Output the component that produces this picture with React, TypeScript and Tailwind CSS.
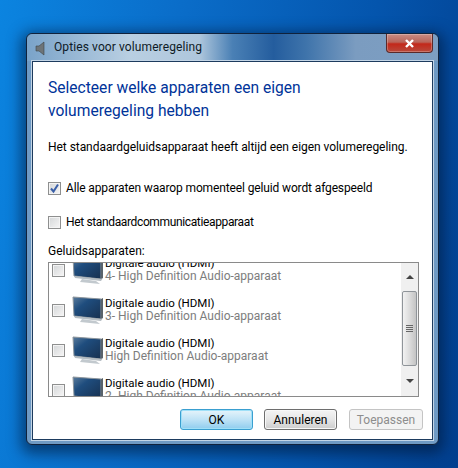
import React from 'react';

const font = { fontFamily: 'Roboto, "Noto Sans", sans-serif' };

const Monitor: React.FC = () => (
  <svg width="34" height="31" viewBox="0 0 34 31" className="shrink-0">
    <defs>
      <linearGradient id="scr" x1="0" y1="0" x2="1" y2="1">
        <stop offset="0" stopColor="#5b7c9c" />
        <stop offset="0.35" stopColor="#1f4d7e" />
        <stop offset="1" stopColor="#17304f" />
      </linearGradient>
    </defs>
    <path d="M1 2 L29 4 L29 24 L2 21 Z" fill="url(#scr)" stroke="#8c959c" strokeWidth="1" />
    <path d="M29 4 L31 3 L31 23 L29 24 Z" fill="#59636b" />
    <path d="M2 21 L29 24 L31 23 L29 26 L3 23 Z" fill="#b4bcc2" />
    <path d="M10 24 L24 26 L28 29 L8 27 Z" fill="#c2c9ce" />
  </svg>
);

const Check: React.FC<{ checked?: boolean }> = ({ checked }) => (
  <span className="flex h-[13px] w-[13px] shrink-0 items-center justify-center border border-[#8e8f8f] bg-gradient-to-br from-[#d4d6d8] to-[#f6f6f6] shadow-[inset_0_0_0_1px_#f4f4f4]">
    {checked && (
      <svg width="11" height="11" viewBox="0 0 11 11">
        <path d="M2 5.5 L4.5 8.5 L9 1.5" fill="none" stroke="#3a5fa8" strokeWidth="2" />
      </svg>
    )}
  </span>
);

const Row: React.FC<{ sub: string; first?: boolean }> = ({ sub, first }) => (
  <div className={`flex h-[40px] shrink-0 items-center pl-[3px] ${first ? 'mt-[-14px]' : ''}`}>
    <Check />
    <span className="ml-[7px]">
      <Monitor />
    </span>
    <div className="ml-[-1px] flex flex-col leading-[13px]">
      <span className="text-[11.5px] text-black">Digitale audio (HDMI)</span>
      <span className="text-[12px] text-[#7d7d7d]">{sub}</span>
    </div>
  </div>
);

const Btn: React.FC<{ label: string; kind: 'ok' | 'normal' | 'off' }> = ({ label, kind }) => {
  const cls =
    kind === 'ok'
      ? 'w-[73px] border-[#3a9fd0] bg-gradient-to-b from-[#e6f4fb] via-[#bfe3f6] to-[#8fcdee] text-black shadow-[inset_0_0_0_1px_#9fe0f8]'
      : kind === 'normal'
        ? 'w-[73px] border-[#6e6e6e] bg-gradient-to-b from-[#f4f4f4] via-[#e6e6e6] to-[#cdcdcd] text-black shadow-[inset_0_0_0_1px_#f8f8f8]'
        : 'ml-px w-[74px] border-[#c4c4c4] bg-[#f3f3f3] text-[#8d8d8d]';
  return (
    <button type="button" className={`flex h-[21px] items-center justify-center rounded-[3px] border text-[12px] ${cls}`}>
      {label}
    </button>
  );
};

export default function App() {
  return (
    <div
      className="h-[468px] w-[458px] overflow-hidden bg-[linear-gradient(100deg,#0b84e0_0%,#0a6cc8_35%,#0455ad_70%,#023f8e_100%)] pl-[26px] pt-[33px]"
      style={font}
    >
      <div className="flex h-[412px] w-[413px] flex-col rounded-[6px] border border-[#10223c] bg-[#6f9ac4] shadow-[0_4px_14px_5px_rgba(0,20,50,0.55)]">
        <div className="flex h-[27px] shrink-0 items-start rounded-t-[6px] bg-[linear-gradient(90deg,#7aa3c9_0%,#b9cfe2_25%,#aec6dc_42%,#4a80b5_50%,#245d9e_60%,#3f74ab_68%,#7b9cc0_80%,#7d9fc3_100%)] pl-[8px]">
          <svg width="12" height="15" viewBox="0 0 12 15" className="mt-[7px] shrink-0">
            <path d="M1 5 H4 L9 1 V14 L4 10 H1 Z" fill="#6d7478" stroke="#3d4347" strokeWidth="0.6" />
          </svg>
          <span className="ml-[7px] mt-[5px] text-[12px] leading-[16px] tracking-[0.1px] text-[#0e1a26]">Opties voor volumeregeling</span>
          <div className="ml-auto mr-[5px] flex h-[19px] w-[47px] items-center justify-center rounded-b-[4px] border border-t-0 border-[#5a2a2a] bg-[linear-gradient(180deg,#c98d85_0%,#b9655a_45%,#c3281a_55%,#b74a3c_100%)] shadow-[inset_0_0_0_1px_rgba(255,255,255,0.25)]">
            <svg width="11" height="9" viewBox="0 0 11 9">
              <path d="M2 1 L9 8 M9 1 L2 8" stroke="#fff" strokeWidth="2.4" />
            </svg>
          </div>
        </div>

        <div className="mx-[5px] flex h-[379px] flex-col border border-[#1d3b5e] bg-white pl-[15px] pr-[9px] shadow-[0_0_0_1px_#c3d5e6]">
          <h1 className="mt-[15px] text-[15.6px] font-normal leading-[23px] text-[#003399]">
            Selecteer welke apparaten een eigen
            <br />
            volumeregeling hebben
          </h1>
          <p className="mt-[16px] text-[12px] leading-[16px] tracking-[-0.05px] text-black">
            Het standaardgeluidsapparaat heeft altijd een eigen volumeregeling.
          </p>
          <div className="mt-[25px] flex items-center gap-[5px] text-[12px] leading-[16px]">
            <Check checked />
            <span className="tracking-[-0.13px]">Alle apparaten waarop momenteel geluid wordt afgespeeld</span>
          </div>
          <div className="mt-[18px] flex items-center gap-[5px] text-[12px] leading-[16px]">
            <Check />
            <span className="tracking-[-0.36px]">Het standaardcommunicatieapparaat</span>
          </div>
          <p className="mt-[13px] text-[12px] leading-[16px]">Geluidsapparaten:</p>
          <div className="mt-[3px] flex h-[135px] w-[371px] shrink-0 border border-[#8a8a8a]">
            <div className="flex min-w-0 flex-1 flex-col overflow-hidden pt-[1px]">
              <Row first sub="4- High Definition Audio-apparaat" />
              <Row sub="3- High Definition Audio-apparaat" />
              <Row sub="High Definition Audio-apparaat" />
              <Row sub="2- High Definition Audio-apparaat" />
            </div>
            <div className="flex w-[17px] shrink-0 flex-col items-center bg-[#f0f0f0]">
              <div className="flex h-[28px] items-center justify-center">
                <span className="h-0 w-0 border-x-[4px] border-b-[4px] border-x-transparent border-b-[#444]" />
              </div>
              <div className="flex h-[75px] w-[15px] flex-col items-center justify-center gap-[1px] rounded-[2px] border border-[#8f9499] bg-gradient-to-r from-[#f2f2f2] via-[#dcdcdc] to-[#c4c4c4]">
                <span className="h-px w-[7px] bg-[#666]" />
                <span className="h-px w-[7px] bg-[#666]" />
                <span className="h-px w-[7px] bg-[#666]" />
                <span className="h-px w-[7px] bg-[#666]" />
              </div>
              <div className="flex flex-1 items-center justify-center">
                <span className="h-0 w-0 border-x-[4px] border-t-[4px] border-x-transparent border-t-[#444]" />
              </div>
            </div>
          </div>
          <div className="mt-[12px] flex justify-end gap-[11px]">
            <Btn label="OK" kind="ok" />
            <Btn label="Annuleren" kind="normal" />
            <Btn label="Toepassen" kind="off" />
          </div>
        </div>
      </div>
    </div>
  );
}
